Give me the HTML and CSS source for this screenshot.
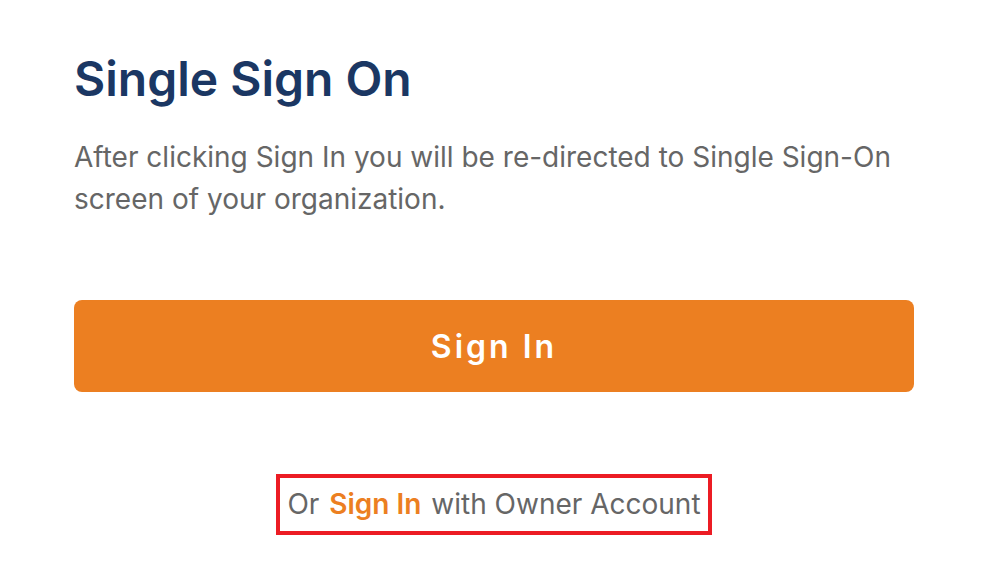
FILE: index.html
```html
<!DOCTYPE html>
<html lang="en">
<head>
<meta charset="utf-8">
<title>Single Sign On</title>
<link rel="stylesheet" href="styles.css">
</head>
<body>
<main class="panel">
  <h1 class="title">Single Sign On</h1>
  <p class="desc">After clicking Sign In you will be re-directed to Single Sign-On screen of your organization.</p>
  <button class="btn" type="button">Sign In</button>
  <div class="alt-wrap">
    <div class="alt">Or <a class="alt-link" href="#">Sign In</a> with Owner Account</div>
  </div>
</main>
</body>
</html>
```
FILE: styles.css
```css
html, body {
  margin: 0;
  padding: 0;
  background: #ffffff;
}
body {
  font-family: Inter, "Noto Sans", sans-serif;
}
.panel {
  width: 840px;
  padding: 50px 0 0 74px;
  display: flex;
  flex-direction: column;
}
.title {
  margin: 0;
  font-size: 48px;
  line-height: 58px;
  font-weight: 600;
  color: #1b3763;
}
.desc {
  margin: 28px 0 0;
  font-size: 28px;
  line-height: 42px;
  color: #666666;
  font-weight: 400;
}
.btn {
  margin-top: 80px;
  height: 92px;
  width: 840px;
  border: none;
  border-radius: 8px;
  background: #ec7f21;
  color: #ffffff;
  font-family: Inter, "Noto Sans", sans-serif;
  font-size: 32px;
  font-weight: 600;
  letter-spacing: 3px;
  cursor: pointer;
}
.alt-wrap {
  display: flex;
  justify-content: center;
  margin-top: 82px;
}
.alt {
  border: 4px solid #ec1c24;
  padding: 8px 7px 8px;
  font-size: 28px;
  line-height: 37px;
  color: #666666;
}
.alt-link {
  margin: 0 2px;
  color: #ec7f21;
  font-weight: 600;
  text-decoration: none;
}
```
